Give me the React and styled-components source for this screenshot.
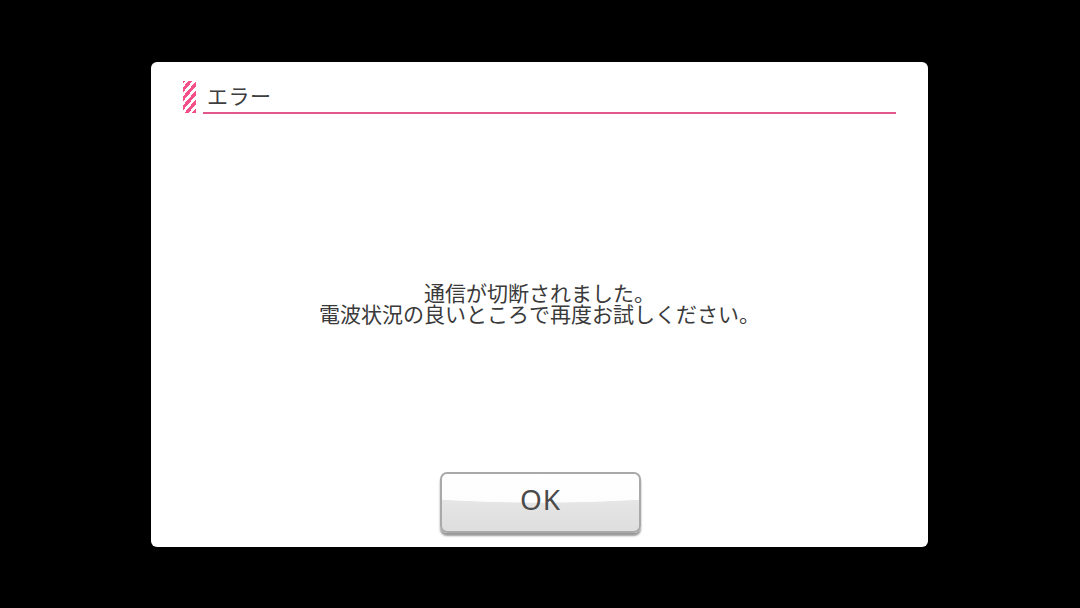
import React from "react";
import styled, { createGlobalStyle } from "styled-components";

const Global = createGlobalStyle`
  html, body {
    margin: 0;
    padding: 0;
    background: #000;
  }
  body {
    font-family: "Noto Sans CJK JP", "Noto Sans", sans-serif;
  }
`;

const Screen = styled.div`
  width: 1080px;
  height: 608px;
  background: #000;
  display: flex;
  align-items: center;
  justify-content: center;
`;

const Dialog = styled.div`
  width: 777px;
  height: 485px;
  margin-left: -1px;
  background: #fff;
  border-radius: 6px;
  display: flex;
  flex-direction: column;
  box-sizing: border-box;
  padding: 19px 32px 14px 32px;
`;

const Header = styled.div`
  display: flex;
  align-items: stretch;
  gap: 7px;
  height: 33px;
`;

const StripeMark = styled.div`
  width: 13px;
  height: 32px;
  background: repeating-linear-gradient(
    -50deg,
    #f4508a 0px,
    #f4508a 3.2px,
    #fff 3.2px,
    #fff 5.8px
  );
`;

const TitleBar = styled.div`
  flex: 1;
  display: flex;
  align-items: center;
  border-bottom: 2px solid #e2588c;
  padding-left: 4px;
  padding-bottom: 2px;
  box-sizing: border-box;
`;

const Title = styled.span`
  font-size: 21px;
  font-weight: 400;
  color: #3e3e3e;
  letter-spacing: 0.5px;
  line-height: 1;
`;

const Body = styled.div`
  flex: 1;
  display: flex;
  align-items: center;
  justify-content: center;
  padding-top: 20px;
`;

const Message = styled.p`
  margin: 0;
  text-align: center;
  font-size: 21px;
  line-height: 21px;
  color: #3a3a3a;
  font-weight: 400;
`;

const Footer = styled.div`
  display: flex;
  justify-content: center;
`;

const OkButton = styled.button`
  width: 201px;
  height: 61px;
  margin-left: 2px;
  border: 2px solid #a9a9a9;
  border-radius: 7px;
  background:
    radial-gradient(ellipse 140% 62% at 50% 0%, #fff 0%, #fdfdfd 80%, rgba(255,255,255,0) 82%),
    linear-gradient(#f2f2f2, #e4e4e4 55%, #dedede);
  box-shadow: 0 3px 2px rgba(0, 0, 0, 0.4);
  font-family: "Noto Sans", "Open Sans", sans-serif;
  font-size: 28px;
  font-weight: 400;
  letter-spacing: 1px;
  color: #4a4a4a;
  display: flex;
  align-items: center;
  justify-content: center;
  padding: 0 0 6px 0;
  cursor: pointer;
`;

export default function App() {
  return (
    <>
      <Global />
      <Screen>
        <Dialog>
          <Header>
            <StripeMark />
            <TitleBar>
              <Title>エラー</Title>
            </TitleBar>
          </Header>
          <Body>
            <Message>
              通信が切断されました。
              <br />
              電波状況の良いところで再度お試しください。
            </Message>
          </Body>
          <Footer>
            <OkButton>OK</OkButton>
          </Footer>
        </Dialog>
      </Screen>
    </>
  );
}
